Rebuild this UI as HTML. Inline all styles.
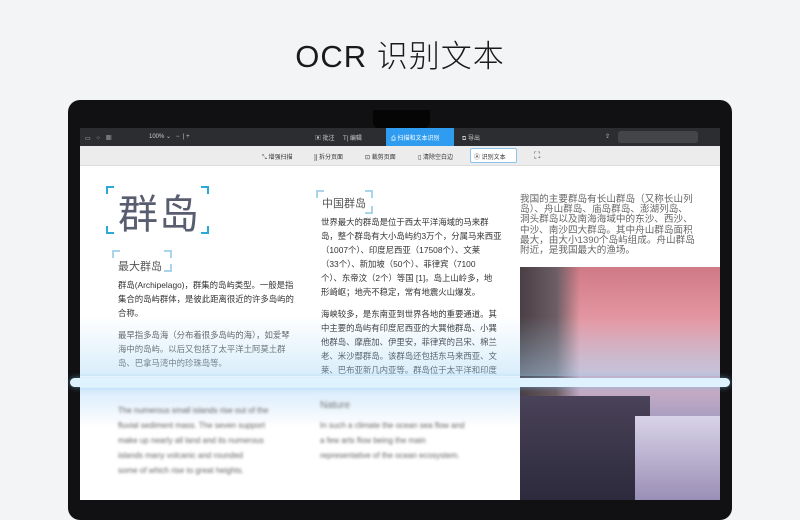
<!DOCTYPE html>
<html><head><meta charset="utf-8"><style>
*{margin:0;padding:0;box-sizing:border-box}
body{width:800px;height:500px;overflow:hidden;background:#f3f4f6;font-family:"Liberation Sans","Noto Sans CJK SC",sans-serif;position:relative}
.title{position:absolute;top:31px;left:0;width:800px;text-align:center;font-size:31px;color:#1a1a1a;letter-spacing:1px;font-weight:300}
.lap{position:absolute;left:68px;top:100px;width:664px;height:420px;background:#111113;border-radius:12px}
.notch{position:absolute;left:373px;top:110px;width:57px;height:18px;background:#050505;border-radius:0 0 6px 6px}
.tb1{position:absolute;left:80px;top:128px;width:640px;height:18px;background:#2c2d30;color:#ccc;font-size:6px}
.tb1 span{position:absolute;top:5px;white-space:nowrap}
.tb2{position:absolute;left:80px;top:146px;width:640px;height:20px;background:#ececec;border-bottom:1px solid #ddd;font-size:6px;color:#333}
.tb2 span{position:absolute;top:6px;white-space:nowrap}
.page{position:absolute;left:80px;top:166px;width:640px;height:334px;background:#fff;overflow:hidden}
.c{color:#333;font-size:8.4px;line-height:14px;position:absolute;white-space:nowrap}
.br{position:absolute;border-color:#29a9d8;border-style:solid;width:8px;height:8px}
.blur{filter:blur(1.3px);color:#666;font-size:8px;line-height:15px;position:absolute;white-space:nowrap}
</style></head><body>
<div class="title">OCR 识别文本</div>
<div class="lap"></div>
<div class="notch"></div>
<div class="tb1">
<span style="left:5px">▭ &nbsp;&nbsp;⁘ &nbsp;&nbsp;▦</span>
<span style="left:69px">100% ⌄ &nbsp; − &nbsp;| +</span>
<span style="left:235px">▣ 批注 &nbsp;&nbsp;&nbsp; T| 编辑</span>
<div style="position:absolute;left:306px;top:0;width:68px;height:18px;background:#2f9cf0"></div>
<span style="left:311px;color:#fff">⎙ 扫描和文本识别</span>
<span style="left:382px">⧉ 导出</span>
<span style="left:525px">⇪</span>
<div style="position:absolute;left:538px;top:3px;width:80px;height:12px;background:#444548;border-radius:3px"></div>
</div>
<div class="tb2">
<span style="left:182px">⤡ 增强扫描</span>
<span style="left:234px">][ 拆分页面</span>
<span style="left:285px">⊡ 裁剪页面</span>
<span style="left:338px">▯ 清除空白边</span>
<div style="position:absolute;left:390px;top:2px;width:47px;height:15px;border:1px solid #8cc4ec;background:#fff;border-radius:2px"></div>
<span style="left:394px">Ⓐ 识别文本</span>
<span style="left:454px;font-size:9px;top:4px">⛶</span>
</div>
<div class="page">
<div class="br" style="left:26px;top:20px;border-width:2px 0 0 2px"></div>
<div class="br" style="left:121px;top:20px;border-width:2px 2px 0 0"></div>
<div class="br" style="left:26px;top:60px;border-width:0 0 2px 2px"></div>
<div class="br" style="left:121px;top:60px;border-width:0 2px 2px 0"></div>
<div style="position:absolute;left:38px;top:16px;font-size:40px;color:#585d70;letter-spacing:1px">群岛</div>
<div class="br" style="left:32px;top:84px;border-width:2px 0 0 2px;border-color:#a9d5ea"></div>
<div class="br" style="left:84px;top:84px;border-width:2px 2px 0 0;border-color:#a9d5ea"></div>
<div class="br" style="left:84px;top:98px;border-width:0 2px 2px 0;border-color:#a9d5ea"></div>
<div style="position:absolute;left:38px;top:92px;font-size:11px;color:#555">最大群岛</div>
<div class="c" style="left:38px;top:112px">群岛(Archipelago)，群集的岛屿类型。一般是指<br>集合的岛屿群体，是彼此距离很近的许多岛屿的<br>合称。</div>
<div class="c" style="left:38px;top:162px;color:#555">最早指多岛海（分布着很多岛屿的海），如爱琴<br>海中的岛屿。以后又包括了太平洋土阿莫土群<br>岛、巴拿马湾中的珍珠岛等。</div>
<div class="br" style="left:236px;top:24px;border-width:2px 0 0 2px;border-color:#a9d5ea"></div>
<div class="br" style="left:285px;top:24px;border-width:2px 2px 0 0;border-color:#a9d5ea"></div>
<div class="br" style="left:285px;top:40px;border-width:0 2px 2px 0;border-color:#a9d5ea"></div>
<div style="position:absolute;left:242px;top:29px;font-size:11px;color:#555">中国群岛</div>
<div class="c" style="left:241px;top:49px">世界最大的群岛是位于西太平洋海域的马来群<br>岛，整个群岛有大小岛屿约3万个，分属马来西亚<br>（1007个）、印度尼西亚（17508个）、文莱<br>（33个）、新加坡（50个）、菲律宾（7100<br>个）、东帝汶（2个）等国 [1]。岛上山岭多，地<br>形崎岖；地壳不稳定，常有地震火山爆发。</div>
<div class="c" style="left:241px;top:141px">海峡较多，是东南亚到世界各地的重要通道。其<br>中主要的岛屿有印度尼西亚的大巽他群岛、小巽<br>他群岛、摩鹿加、伊里安，菲律宾的吕宋、棉兰<br>老、米沙鄢群岛。该群岛还包括东马来西亚、文<br>莱、巴布亚新几内亚等。群岛位于太平洋和印度</div>
<div class="c" style="left:440px;top:29px;color:#666;line-height:10.2px;font-size:9.6px">我国的主要群岛有长山群岛（又称长山列<br>岛）、舟山群岛、庙岛群岛、澎湖列岛、<br>洞头群岛以及南海海域中的东沙、西沙、<br>中沙、南沙四大群岛。其中舟山群岛面积<br>最大，由大小1390个岛屿组成。舟山群岛<br>附近，是我国最大的渔场。</div>
<div style="position:absolute;left:440px;top:101px;width:200px;height:233px;background:linear-gradient(180deg,#d07a86 0%,#e59aa5 25%,#d9b3c4 45%,#a89ec2 65%,#8d7fae 100%)"></div>
<div style="position:absolute;left:440px;top:101px;width:60px;height:233px;background:linear-gradient(90deg,#4a3f45,#6b5d63 60%,rgba(100,90,100,0))"></div>
<div style="position:absolute;left:440px;top:230px;width:130px;height:104px;background:linear-gradient(180deg,#4a4258,#2c2a3c)"></div>
<div style="position:absolute;left:555px;top:250px;width:85px;height:84px;background:linear-gradient(180deg,#d9d3e8,#9a8fb6)"></div>
<div style="position:absolute;left:0;top:150px;width:640px;height:60px;background:linear-gradient(180deg,rgba(170,215,245,0),rgba(170,215,245,.45))"></div>
<div style="position:absolute;left:0;top:222px;width:440px;height:40px;background:linear-gradient(180deg,#d7ebfb,#fff)"></div>
<div class="blur" style="left:38px;top:237px">The numerous small islands rise out of the<br>fluvial sediment mass. The seven support<br>make up nearly all land and its numerous<br>islands many volcanic and rounded<br>some of which rise to great heights.</div>
<div class="blur" style="left:240px;top:232px;font-size:10px;color:#777">Nature</div>
<div class="blur" style="left:240px;top:252px">In such a climate the ocean sea flow and<br>a few arts flow being the main<br>representative of the ocean ecosystem.</div>
</div>
<div style="position:absolute;left:70px;top:378px;width:660px;height:9px;background:#def3fd;border-radius:5px;box-shadow:0 0 6px rgba(120,190,240,.6)"></div>
</body></html>
